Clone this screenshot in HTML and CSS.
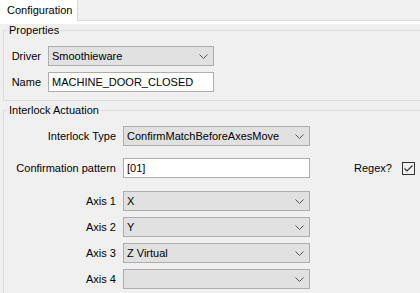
FILE: index.html
```html
<!DOCTYPE html>
<html lang="en">
<head>
    <meta charset="UTF-8">
    <title>Configuration</title>
    <link rel="stylesheet" href="styles.css">
</head>
<body>
    <div class="tabbar">
        <div class="tab">Configuration</div>
    </div>
    <div class="panel">
        <fieldset class="group props">
            <legend>Properties</legend>
            <div class="row">
                <label class="lbl">Driver</label>
                <div class="combo">Smoothieware
                    <svg class="chev" width="9" height="5" viewBox="0 0 9 5"><polyline points="0.5,0.5 4.5,4.5 8.5,0.5"/></svg>
                </div>
            </div>
            <div class="row">
                <label class="lbl">Name</label>
                <div class="input">MACHINE_DOOR_CLOSED</div>
            </div>
        </fieldset>

        <fieldset class="group interlock">
            <legend>Interlock Actuation</legend>
            <div class="row wide">
                <label class="lbl">Interlock Type</label>
                <div class="combo">ConfirmMatchBeforeAxesMove
                    <svg class="chev" width="9" height="5" viewBox="0 0 9 5"><polyline points="0.5,0.5 4.5,4.5 8.5,0.5"/></svg>
                </div>
            </div>
            <div class="row wide">
                <label class="lbl">Confirmation pattern</label>
                <div class="input">[01]</div>
                <span class="regex">Regex?</span>
                <span class="check">
                    <svg width="11" height="11" viewBox="0 0 11 11"><polyline points="1.5,5.5 4,8 9.5,2.5"/></svg>
                </span>
            </div>
            <div class="row">
                <label class="lbl">Axis 1</label>
                <div class="combo">X
                    <svg class="chev" width="9" height="5" viewBox="0 0 9 5"><polyline points="0.5,0.5 4.5,4.5 8.5,0.5"/></svg>
                </div>
            </div>
            <div class="row">
                <label class="lbl">Axis 2</label>
                <div class="combo">Y
                    <svg class="chev" width="9" height="5" viewBox="0 0 9 5"><polyline points="0.5,0.5 4.5,4.5 8.5,0.5"/></svg>
                </div>
            </div>
            <div class="row">
                <label class="lbl">Axis 3</label>
                <div class="combo">Z Virtual
                    <svg class="chev" width="9" height="5" viewBox="0 0 9 5"><polyline points="0.5,0.5 4.5,4.5 8.5,0.5"/></svg>
                </div>
            </div>
            <div class="row">
                <label class="lbl">Axis 4</label>
                <div class="combo">
                    <svg class="chev" width="9" height="5" viewBox="0 0 9 5"><polyline points="0.5,0.5 4.5,4.5 8.5,0.5"/></svg>
                </div>
            </div>
        </fieldset>
    </div>
</body>
</html>
```

FILE: styles.css
```css
html, body {
    margin: 0;
    height: 100%;
    overflow: hidden;
}
body {
    background: #f0f0f0;
    font-family: "Liberation Sans", Arial, sans-serif;
    font-size: 11px;
    color: #000;
}
.tabbar {
    display: flex;
    height: 20px;
    border-bottom: 1px solid #d9d9d9;
}
.tab {
    width: 70px;
    padding-left: 7px;
    height: 21px;
    line-height: 20px;
    background: #fff;
    border-right: 1px solid #d9d9d9;
    position: relative;
    z-index: 1; /* covers the strip line under the tab */
}
.panel {
    border-top: 3px solid #fff;
}
.group {
    margin: 0 0 0 3px;
    padding: 9px 0 0 0;
    border: 1px solid #dcdcdc;
    border-right: none;
    min-width: 0;
}
.group legend {
    margin-left: 3px;
    padding: 0 2px;
    line-height: 13px;
}
.props {
    padding-bottom: 2px;
}
.interlock {
    margin-top: 3px;
    padding-bottom: 1px; /* bottom edge falls just below the window */
}
.row {
    display: flex;
    align-items: center;
    height: 20px;
    margin-bottom: 6px;
}
.props .lbl {
    width: 37px;
}
.interlock .lbl {
    width: 112px;
}
.interlock .row.wide {
    margin-bottom: 12px;
}
.interlock .row.wide + .row.wide {
    margin-bottom: 13px;
}
.lbl {
    text-align: right;
    margin-right: 7px;
}
.combo, .input {
    box-sizing: border-box;
    height: 20px;
    line-height: 18px;
    padding-left: 3px;
    border: 1px solid #adadad;
    position: relative;
    white-space: nowrap;
}
.combo {
    background: #e1e1e1;
}
.input {
    background: #fff;
}
.props .combo, .props .input {
    width: 166px;
}
.interlock .combo, .interlock .input {
    width: 187px;
}
.chev {
    position: absolute;
    right: 5px;
    top: 7px;
    fill: none;
    stroke: #555;
    stroke-width: 1;
}
.regex {
    margin-left: 44px;
}
.check {
    box-sizing: border-box;
    width: 13px;
    height: 13px;
    margin-left: 10px;
    border: 1px solid #333;
    display: flex;
}
.check svg {
    fill: none;
    stroke: #333;
    stroke-width: 1.2;
}
```
